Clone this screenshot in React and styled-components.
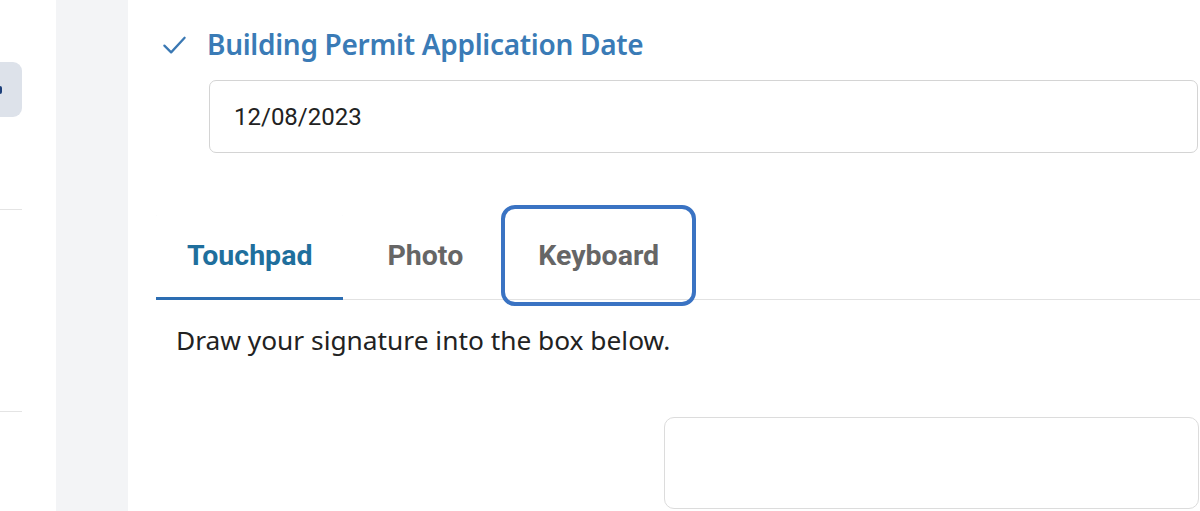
import React, { useState } from 'react'
import styled, { createGlobalStyle } from 'styled-components'

const GlobalStyle = createGlobalStyle`
    html, body {
        margin: 0;
        padding: 0;
        background: #ffffff;
        overflow: hidden;
    }
    * {
        box-sizing: border-box;
    }
`

const Page = styled.div`
    display: flex;
    width: 1200px;
    height: 511px;
    overflow: hidden;
    font-family: "Noto Sans", "Liberation Sans", sans-serif;
`

const Sidebar = styled.div`
    width: 56px;
    flex-shrink: 0;
    background: #ffffff;
    display: flex;
    flex-direction: column;
    padding-top: 62px;
`

const SideItem = styled.div`
    width: 22px;
    height: 55px;
    background: #dde2ea;
    border-radius: 0 9px 9px 0;
    display: flex;
    align-items: center;
`

const SideMark = styled.span`
    width: 2px;
    height: 8px;
    background: #1c3f7a;
    border-radius: 0 2px 2px 0;
`

const SideRule = styled.div`
    width: 22px;
    height: 1px;
    background: #e4e4e4;
    margin-top: ${props => props.gap}px;
`

const Gutter = styled.div`
    width: 72px;
    flex-shrink: 0;
    background: #f3f4f6;
`

const Main = styled.div`
    flex: 1;
    background: #ffffff;
    padding: 26px 0 0 0;
    display: flex;
    flex-direction: column;
    min-width: 0;
`

const FieldHeader = styled.div`
    display: flex;
    align-items: center;
    gap: 19px;
    padding-left: 33px;
    height: 36px;
`

const Check = styled.svg`
    width: 27px;
    height: 27px;
    flex-shrink: 0;
`

const FieldLabel = styled.h2`
    margin: 0;
    font-family: "Noto Sans", sans-serif;
    font-weight: 600;
    font-size: 28px;
    color: #3a7bb6;
    letter-spacing: -0.3px;
    line-height: 36px;
`

const DateInput = styled.input`
    margin: 18px 2px 0 81px;
    height: 73px;
    border: 1px solid #d4d4d4;
    border-radius: 7px;
    padding: 0 24px;
    font-family: Roboto, sans-serif;
    font-size: 24px;
    color: #222222;
    background: #ffffff;
    outline: none;
`

const TabList = styled.div`
    margin: 58px 0 0 28px;
    display: flex;
    gap: 13px;
    border-bottom: 1px solid #e2e2e2;
`

const Tab = styled.button`
    height: 89px;
    padding: 0 31px;
    border: none;
    background: transparent;
    font-family: Roboto, sans-serif;
    font-weight: 700;
    font-size: 28.5px;
    color: ${props => (props.active ? '#1f6f9d' : '#666666')};
    box-shadow: ${props => (props.active ? 'inset 0 -3px 0 #2c6db2' : 'none')};
    outline: ${props => (props.focused ? '4px solid #3a73c3' : 'none')};
    outline-offset: 2px;
    border-radius: 8px 8px ${props => (props.focused ? '8px 8px' : '0 0')};
    margin-bottom: -1px;
    cursor: pointer;
`

const Hint = styled.p`
    margin: 22px 0 0 48px;
    font-family: "Noto Sans", sans-serif;
    font-size: 26.3px;
    line-height: 36px;
    color: #222222;
`

const SignaturePad = styled.div`
    margin: 59px 1px 0 536px;
    height: 92px;
    border: 1px solid #dcdcdc;
    border-radius: 10px;
    flex-shrink: 0;
`

export default function App() {
    const [tab, setTab] = useState('touchpad')
    const tabs = [
        { id: 'touchpad', label: 'Touchpad' },
        { id: 'photo', label: 'Photo' },
        { id: 'keyboard', label: 'Keyboard' },
    ]

    return (
        <Page>
            <GlobalStyle />
            <Sidebar>
                <SideItem>
                    <SideMark />
                </SideItem>
                <SideRule gap={92} />
                <SideRule gap={201} />
            </Sidebar>
            <Gutter />
            <Main>
                <FieldHeader>
                    <Check viewBox="0 0 24 24" fill="none" stroke="#3a78b3" strokeWidth="2" strokeLinecap="round" strokeLinejoin="round">
                        <path d="M3 13l6 6L21 6" />
                    </Check>
                    <FieldLabel>Building Permit Application Date</FieldLabel>
                </FieldHeader>
                <DateInput defaultValue="12/08/2023" />
                <TabList>
                    {tabs.map(t => (
                        <Tab
                            key={t.id}
                            active={tab === t.id}
                            focused={t.id === 'keyboard'}
                            onClick={() => setTab(t.id)}
                        >
                            {t.label}
                        </Tab>
                    ))}
                </TabList>
                <Hint>Draw your signature into the box below.</Hint>
                <SignaturePad />
            </Main>
        </Page>
    )
}
